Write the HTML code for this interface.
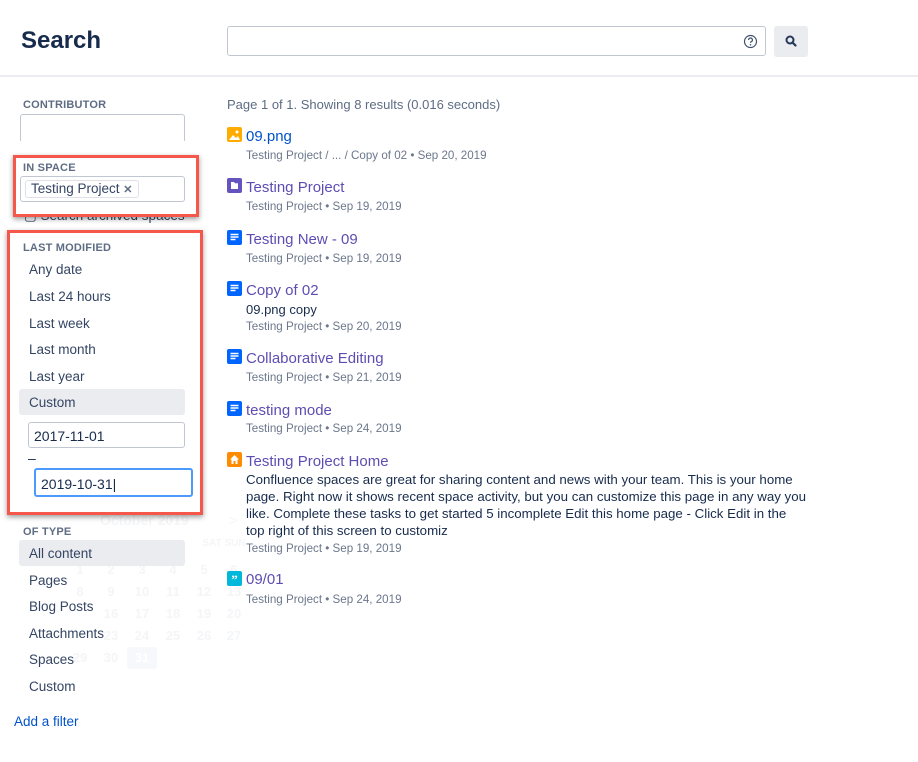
<!DOCTYPE html>
<html><head><meta charset="utf-8"><style>
*{margin:0;padding:0;box-sizing:border-box}
body{width:918px;height:762px;background:#fff;font-family:"Liberation Sans",Arial,sans-serif;color:#172b4d;position:relative;overflow:hidden}
.a{position:absolute;white-space:nowrap}
.lbl{font-size:11px;font-weight:bold;color:#5e6c84;letter-spacing:.2px}
.it{font-size:13.5px;color:#344563;left:29px}
.inp{position:absolute;border:1px solid #c1c7d0;border-radius:3px;background:#fff}
.t{font-size:15px;color:#5e4db2;left:246px}
.m{font-size:11.6px;color:#6b778c;left:246px}
.ic{position:absolute;left:227px;width:15px;height:15px;border-radius:2px}
.cal{font-size:13px;color:#f4f5f7;font-weight:bold;text-align:center;width:24px}
</style></head><body>
<div class="a" style="left:21px;top:27px;font-size:24px;font-weight:bold;color:#172b4d">Search</div>
<div class="inp" style="left:227px;top:26px;width:539px;height:30px"></div>
<svg class="a" style="left:743px;top:34px" width="15" height="15" viewBox="0 0 15 15"><circle cx="7.5" cy="7.5" r="6" fill="none" stroke="#42526e" stroke-width="1.2"/><path d="M5.6 6a1.9 1.9 0 1 1 2.6 1.7c-.5.3-.7.6-.7 1.2" fill="none" stroke="#42526e" stroke-width="1.2"/><circle cx="7.5" cy="10.8" r=".8" fill="#42526e"/></svg>
<div class="a" style="left:774px;top:26px;width:34px;height:31px;background:#ebecf0;border-radius:3px"></div>
<svg class="a" style="left:785px;top:35px" width="12" height="12" viewBox="0 0 12 12"><circle cx="5" cy="5" r="3.5" fill="none" stroke="#253858" stroke-width="2"/><path d="M7.5 7.5L10.5 10.5" stroke="#253858" stroke-width="2.2" stroke-linecap="round"/></svg>
<div class="a" style="left:0;top:75px;width:918px;height:2px;background:#ebecf0"></div>

<!-- faint calendar -->
<div class="a" style="left:100px;top:512px;font-size:14px;font-weight:bold;color:#f4f5f7">October 2019</div>
<div class="a" style="left:229px;top:512px;font-size:14px;color:#f4f5f7">&gt;</div>
<div class="a cal" style="left:200px;top:538px;font-size:10px">SAT</div><div class="a cal" style="left:223px;top:538px;font-size:10px">SUN</div>
<div class="a cal" style="left:68px;top:562px">1</div><div class="a cal" style="left:99px;top:562px">2</div><div class="a cal" style="left:130px;top:562px">3</div><div class="a cal" style="left:161px;top:562px">4</div><div class="a cal" style="left:192px;top:562px">5</div><div class="a cal" style="left:222px;top:562px">6</div>
<div class="a cal" style="left:68px;top:584px">8</div><div class="a cal" style="left:99px;top:584px">9</div><div class="a cal" style="left:130px;top:584px">10</div><div class="a cal" style="left:161px;top:584px">11</div><div class="a cal" style="left:192px;top:584px">12</div><div class="a cal" style="left:222px;top:584px">13</div>
<div class="a cal" style="left:99px;top:606px">16</div><div class="a cal" style="left:130px;top:606px">17</div><div class="a cal" style="left:161px;top:606px">18</div><div class="a cal" style="left:192px;top:606px">19</div><div class="a cal" style="left:222px;top:606px">20</div>
<div class="a cal" style="left:99px;top:628px">23</div><div class="a cal" style="left:130px;top:628px">24</div><div class="a cal" style="left:161px;top:628px">25</div><div class="a cal" style="left:192px;top:628px">26</div><div class="a cal" style="left:222px;top:628px">27</div>
<div class="a" style="left:127px;top:647px;width:30px;height:22px;background:#f6f8fc;border-radius:3px"></div>
<div class="a cal" style="left:68px;top:650px">29</div><div class="a cal" style="left:99px;top:650px">30</div><div class="a cal" style="left:130px;top:650px;color:#fff">31</div>

<!-- left filters -->
<div class="a lbl" style="left:23px;top:99px">CONTRIBUTOR</div>
<div class="inp" style="left:20px;top:114px;width:165px;height:27px;border-bottom:none;border-radius:3px 3px 0 0"></div>
<div class="a" style="left:24px;top:208px;font-size:13.5px;color:#344563">&#9634; Search archived spaces</div>

<div class="a" style="left:13px;top:155px;width:186px;height:62px;border:3px solid #f5584a;background:#fff;box-shadow:0 2px 5px rgba(0,0,0,.4)"></div>
<div class="a lbl" style="left:23px;top:162px">IN SPACE</div>
<div class="inp" style="left:20px;top:176px;width:165px;height:26px"></div>
<div class="a" style="left:25px;top:180px;height:18px;border:1px solid #dfe1e6;border-radius:3px;padding:0 5px;font-size:13.5px;line-height:16px;color:#344563">Testing Project <span style="font-size:11px;font-weight:bold;color:#5e6c84">✕</span></div>

<div class="a" style="left:7px;top:230px;width:196px;height:285px;border:3px solid #f5584a;background:#fff;box-shadow:0 2px 5px rgba(0,0,0,.4)"></div>
<div class="a lbl" style="left:23px;top:242px">LAST MODIFIED</div>
<div class="a it" style="top:262px">Any date</div>
<div class="a it" style="top:289px">Last 24 hours</div>
<div class="a it" style="top:316px">Last week</div>
<div class="a it" style="top:342px">Last month</div>
<div class="a it" style="top:369px">Last year</div>
<div class="a" style="left:19px;top:389px;width:166px;height:26px;background:#ebecf0;border-radius:3px"></div>
<div class="a it" style="top:395px">Custom</div>
<div class="inp" style="left:28px;top:422px;width:157px;height:26px"></div>
<div class="a" style="left:34px;top:428px;font-size:14px;color:#172b4d">2017-11-01</div>
<div class="a" style="left:28px;top:450px;font-size:14px;color:#172b4d">–</div>
<div class="a" style="left:34px;top:468px;width:159px;height:29px;border:2px solid #4c9aff;border-radius:3px"></div>
<div class="a" style="left:41px;top:476px;font-size:14px;color:#172b4d">2019-10-31|</div>

<div class="a lbl" style="left:23px;top:526px">OF TYPE</div>
<div class="a" style="left:19px;top:540px;width:166px;height:26px;background:#ebecf0;border-radius:3px"></div>
<div class="a it" style="top:546px">All content</div>
<div class="a it" style="top:573px">Pages</div>
<div class="a it" style="top:599px">Blog Posts</div>
<div class="a it" style="top:626px">Attachments</div>
<div class="a it" style="top:652px">Spaces</div>
<div class="a it" style="top:679px">Custom</div>
<div class="a" style="left:14px;top:714px;font-size:13.5px;color:#0052cc">Add a filter</div>

<!-- results -->
<div class="a" style="left:227px;top:97px;font-size:13px;color:#5e6c84">Page 1 of 1. Showing 8 results (0.016 seconds)</div>

<svg class="ic" style="top:127px;background:#ffab00" viewBox="0 0 15 15"><circle cx="10" cy="5" r="1.5" fill="#fff"/><path d="M2 13l4-5 3 3 2-2 2 4z" fill="#fff"/></svg>
<div class="a t" style="top:128px;color:#0052cc">09.png</div>
<div class="a m" style="top:149px">Testing Project / ... / Copy of 02 • Sep 20, 2019</div>

<svg class="ic" style="top:178px;background:#6554c0" viewBox="0 0 15 15"><path d="M4 4h3l1 1.2h3V11H4z" fill="#fff"/></svg>
<div class="a t" style="top:179px">Testing Project</div>
<div class="a m" style="top:200px">Testing Project • Sep 19, 2019</div>

<svg class="ic" style="top:230px;background:#0065ff" viewBox="0 0 15 15"><path d="M3.5 4.5h8M3.5 7h8M3.5 9.5h5" stroke="#fff" stroke-width="1.4"/></svg>
<div class="a t" style="top:231px">Testing New - 09</div>
<div class="a m" style="top:252px">Testing Project • Sep 19, 2019</div>

<svg class="ic" style="top:281px;background:#0065ff" viewBox="0 0 15 15"><path d="M3.5 4.5h8M3.5 7h8M3.5 9.5h5" stroke="#fff" stroke-width="1.4"/></svg>
<div class="a t" style="top:282px">Copy of 02</div>
<div class="a" style="left:246px;top:302px;font-size:13px;color:#172b4d">09.png copy</div>
<div class="a m" style="top:320px">Testing Project • Sep 20, 2019</div>

<svg class="ic" style="top:349px;background:#0065ff" viewBox="0 0 15 15"><path d="M3.5 4.5h8M3.5 7h8M3.5 9.5h5" stroke="#fff" stroke-width="1.4"/></svg>
<div class="a t" style="top:350px">Collaborative Editing</div>
<div class="a m" style="top:371px">Testing Project • Sep 21, 2019</div>

<svg class="ic" style="top:401px;background:#0065ff" viewBox="0 0 15 15"><path d="M3.5 4.5h8M3.5 7h8M3.5 9.5h5" stroke="#fff" stroke-width="1.4"/></svg>
<div class="a t" style="top:402px">testing mode</div>
<div class="a m" style="top:422px">Testing Project • Sep 24, 2019</div>

<svg class="ic" style="top:452px;background:#ff8b00" viewBox="0 0 15 15"><path d="M7.5 3L3 7.5h1.5V12h2V9h2v3h2V7.5H12z" fill="#fff"/></svg>
<div class="a t" style="top:453px">Testing Project Home</div>
<div class="a" style="left:246px;top:471px;font-size:13.3px;line-height:17px;color:#172b4d">Confluence spaces are great for sharing content and news with your team. This is your home<br>page. Right now it shows recent space activity, but you can customize this page in any way you<br>like. Complete these tasks to get started 5 incomplete Edit this home page - Click Edit in the<br>top right of this screen to customiz</div>
<div class="a m" style="top:542px">Testing Project • Sep 19, 2019</div>

<svg class="ic" style="top:571px;background:#00b8d9" viewBox="0 0 15 15"><text x="7.5" y="13" font-size="13" font-weight="bold" fill="#fff" text-anchor="middle" font-family="Liberation Serif">”</text></svg>
<div class="a t" style="top:571px">09/01</div>
<div class="a m" style="top:593px">Testing Project • Sep 24, 2019</div>
</body></html>
